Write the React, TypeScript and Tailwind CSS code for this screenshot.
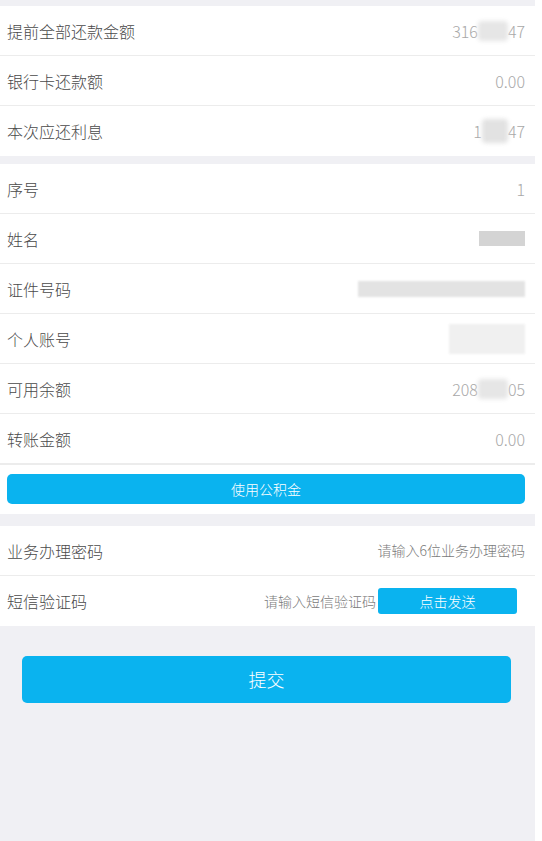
import React from 'react'

const font = { fontFamily: '"Noto Sans CJK SC", "Noto Sans", sans-serif' }

function Row({ label, children, last = false }: { label: string; children?: React.ReactNode; last?: boolean }) {
  return (
    <div className={`flex h-[50px] items-center justify-between pl-[7px] pr-[10px] ${last ? '' : 'border-b border-[#ececec]'}`}>
      <span className="text-[16px] font-light text-[#4a4a4a]">{label}</span>
      <div className="flex items-center text-[16px] font-light text-[#a8a8a8]">{children}</div>
    </div>
  )
}

// blurred-out digits in the screenshot
function Smudge({ w, h = 20, tone = 'bg-[#e6e6e6]' }: { w: number; h?: number; tone?: string }) {
  return <span className={`inline-block rounded-sm blur-[2px] ${tone}`} style={{ width: w, height: h }} />
}

export default function App() {
  return (
    <div className="min-h-[841px] bg-white" style={font}>
      <div className="min-h-[841px] w-[535px] bg-[#f0f0f4] pt-[6px]">
        <section className="bg-white">
          <Row label="提前全部还款金额">
            <span>316</span>
            <Smudge w={30} />
            <span>47</span>
          </Row>
          <Row label="银行卡还款额">0.00</Row>
          <Row label="本次应还利息" last>
            <span>1</span>
            <Smudge w={26} h={24} tone="bg-[#e2e2e2]" />
            <span>47</span>
          </Row>
        </section>

        <section className="mt-[8px] bg-white">
          <Row label="序号">1</Row>
          <Row label="姓名">
            <span className="inline-block h-[15px] w-[46px] bg-[#d4d4d4] blur-[0.5px]" />
          </Row>
          <Row label="证件号码">
            <span className="inline-block h-[16px] w-[167px] bg-[#e3e3e3] blur-[1px]" />
          </Row>
          <Row label="个人账号">
            <span className="inline-block h-[30px] w-[76px] bg-[#f0f0f0] blur-[1px]" />
          </Row>
          <Row label="可用余额">
            <span>208</span>
            <Smudge w={30} />
            <span>05</span>
          </Row>
          <Row label="转账金额">0.00</Row>
          <div className="border-t border-[#ececec] pl-[7px] pr-[10px] pb-[10px] pt-[9px]">
            <button className="h-[30px] w-full rounded-[5px] bg-[#0ab3ef] text-[14px] font-light text-white">使用公积金</button>
          </div>
        </section>

        <section className="mt-[12px] bg-white">
          <Row label="业务办理密码">
            <span className="text-[14px] text-[#7a7a7a]">请输入6位业务办理密码</span>
          </Row>
          <div className="flex h-[50px] items-center justify-between pl-[7px] pr-[18px]">
            <span className="text-[16px] font-light text-[#4a4a4a]">短信验证码</span>
            <div className="flex items-center">
              <span className="text-[14px] font-light text-[#7a7a7a]">请输入短信验证码</span>
              <button className="ml-[2px] h-[26px] w-[139px] rounded-[3px] bg-[#0ab3ef] text-[14px] font-light text-white">点击发送</button>
            </div>
          </div>
        </section>

        <div className="px-[22px] pt-[30px]">
          <button className="h-[47px] w-[489px] rounded-[5px] bg-[#0ab3ef] text-[18px] font-light text-white">提交</button>
        </div>
      </div>
    </div>
  )
}
